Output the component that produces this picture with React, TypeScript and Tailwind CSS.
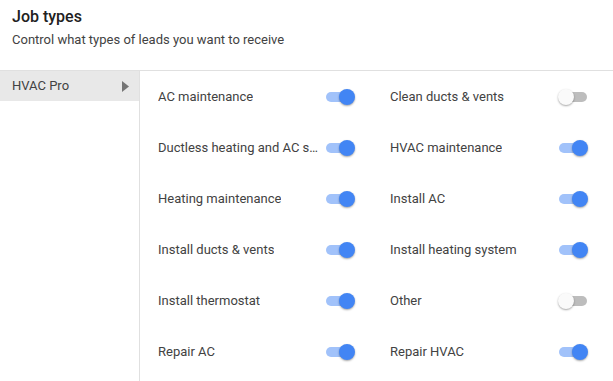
import React from "react";

const jobs: [string, boolean][] = [
  ["AC maintenance", true],
  ["Clean ducts & vents", false],
  ["Ductless heating and AC services", true],
  ["HVAC maintenance", true],
  ["Heating maintenance", true],
  ["Install AC", true],
  ["Install ducts & vents", true],
  ["Install heating system", true],
  ["Install thermostat", true],
  ["Other", false],
  ["Repair AC", true],
  ["Repair HVAC", true],
];

function Toggle({ on }: { on: boolean }) {
  return (
    <div className="relative w-[30px] h-[16px] flex items-center shrink-0">
      <div
        className={
          "w-[28px] h-[10px] rounded-full ml-[1px] " +
          (on ? "bg-[#a1c2fa]" : "bg-[#bdbdbd]")
        }
      />
      <div
        className={
          "absolute top-0 w-[16px] h-[16px] rounded-full shadow-[0_1px_2px_rgba(0,0,0,0.35)] " +
          (on ? "right-0 bg-[#4285f4]" : "left-0 bg-[#fafafa]")
        }
      />
    </div>
  );
}

export default function App() {
  return (
    <div className="w-[613px] h-[381px] bg-white overflow-hidden font-['Roboto',sans-serif] text-[#424242]">
      {/* Header */}
      <div className="px-3 pt-[7px] h-[70px]">
        <h1 className="text-[16px] leading-[20px] font-medium text-[#212121]">Job types</h1>
        <p className="mt-[5px] text-[13px] leading-[16px] text-[#424242]">
          Control what types of leads you want to receive
        </p>
      </div>

      <div className="flex border-t border-[#e0e0e0] h-[311px]">
        {/* Sidebar */}
        <div className="w-[140px] shrink-0 border-r border-[#e0e0e0]">
          <div className="h-[30px] bg-[#e8e8e8] flex items-center justify-between pl-3 pr-[10px]">
            <span className="text-[13px] text-[#424242]">HVAC Pro</span>
            <svg width="7" height="11" viewBox="0 0 7 11">
              <path d="M0 0 L7 5.5 L0 11 Z" fill="#757575" />
            </svg>
          </div>
        </div>

        {/* Toggles */}
        <div className="flex-1 grid grid-cols-[232px_198px] auto-rows-[51px] pl-[18px]">
          {jobs.map(([label, on], i) => (
            <div
              key={label}
              className={
                "flex items-center justify-between min-w-0 " +
                (i % 2 === 0 ? "pr-[35px]" : "")
              }
            >
              <span className="text-[13px] text-[#424242] truncate mr-[6px]">{label}</span>
              <Toggle on={on} />
            </div>
          ))}
        </div>
      </div>
    </div>
  );
}
